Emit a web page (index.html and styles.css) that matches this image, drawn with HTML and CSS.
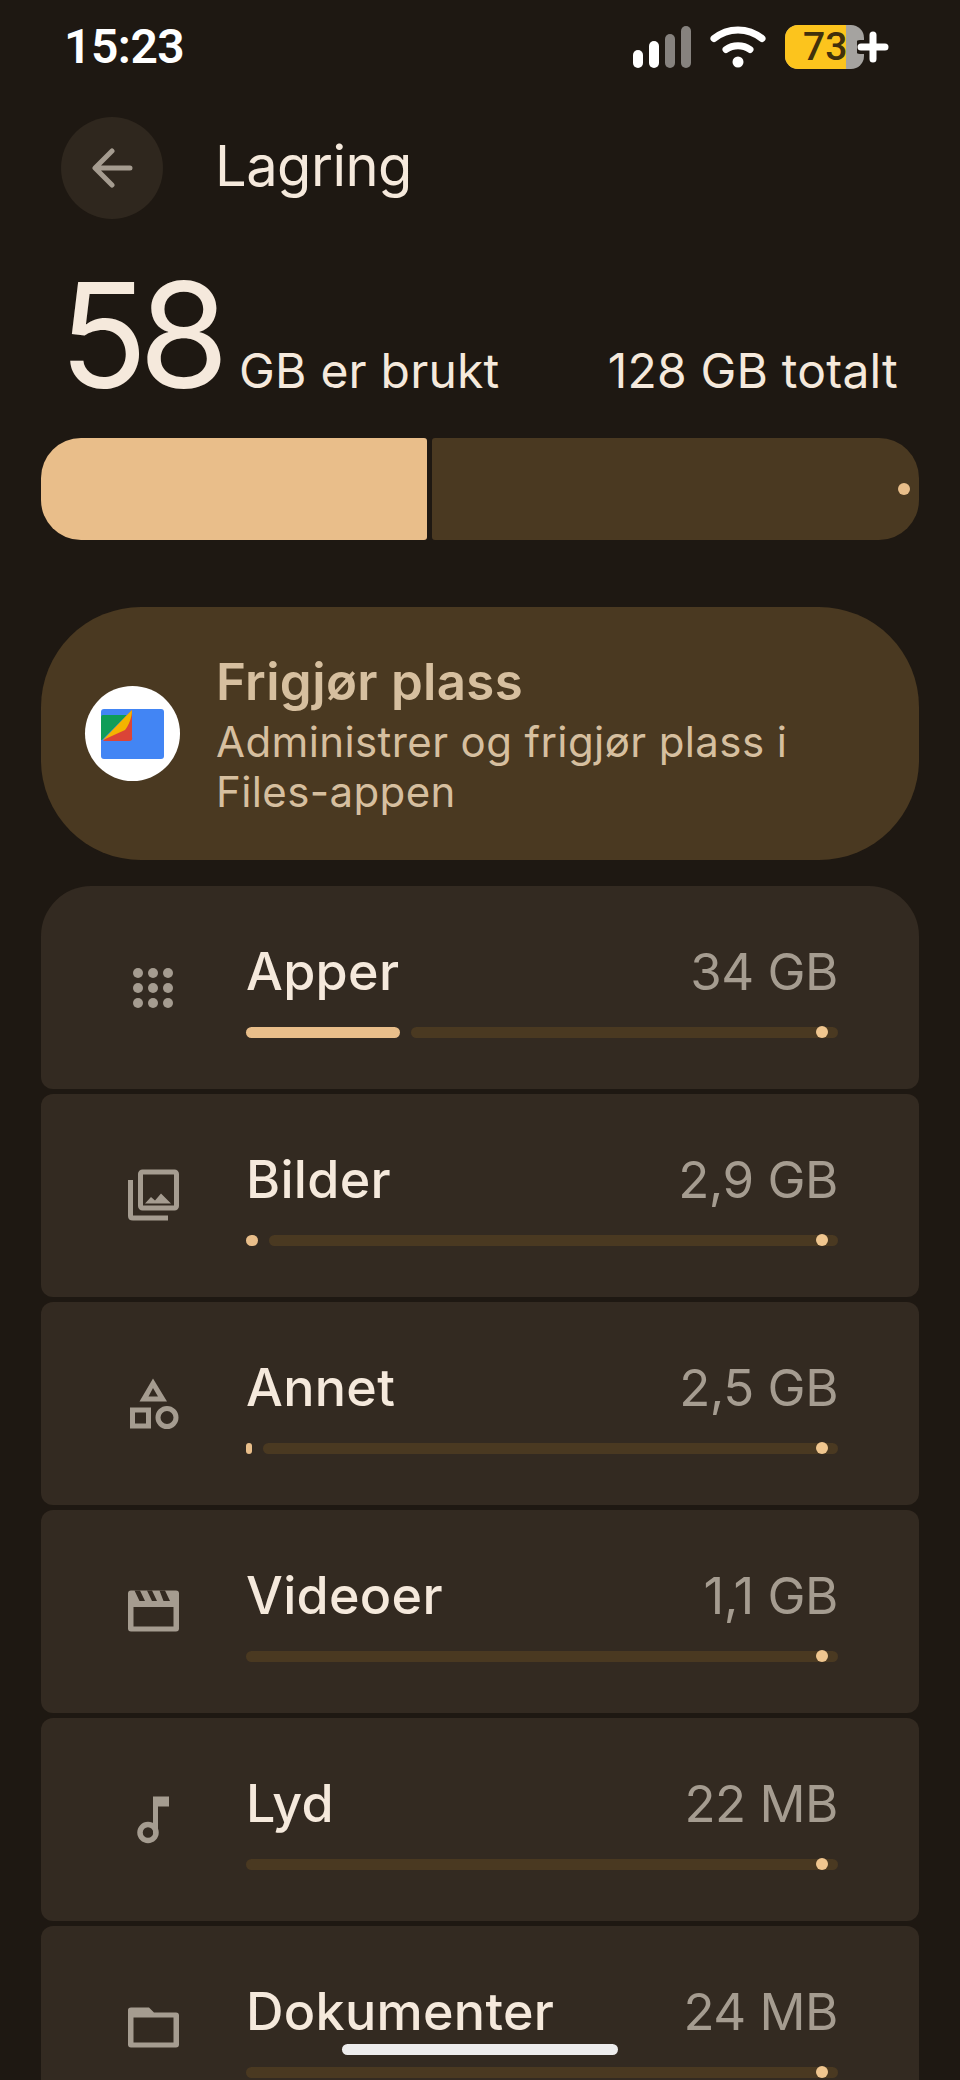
FILE: index.html
```html
<!DOCTYPE html>
<html lang="nb">
<head>
    <meta charset="UTF-8">
    <meta name="viewport" content="width=device-width, initial-scale=1.0">
    <title>Lagring</title>
    <link rel="stylesheet" href="styles.css">
</head>
<body>
    <div class="screen">
        <div class="status-bar">
            <span class="time">15:23</span>
            <div class="status-icons">
                <svg class="signal" width="58" height="42" viewBox="0 0 58 42">
                    <rect x="0" y="24" width="10" height="18" rx="5" fill="#fff"/>
                    <rect x="16" y="15" width="10" height="27" rx="5" fill="#fff"/>
                    <rect x="32" y="8" width="10" height="34" rx="5" fill="#86827e"/>
                    <rect x="48" y="0" width="10" height="42" rx="5" fill="#86827e"/>
                </svg>
                <svg class="wifi" width="56" height="42" viewBox="0 0 56 42">
                    <path d="M4 12.500C18 1 38 1 52 12.500" fill="none" stroke="#fff" stroke-width="7" stroke-linecap="round"/>
                    <path d="M16 23.500C23 18.500 33 18.500 40 23.500" fill="none" stroke="#fff" stroke-width="7" stroke-linecap="round"/>
                    <circle cx="28" cy="36" r="5.500" fill="#fff"/>
                </svg>
                <div class="battery">
                    <span class="battery-fill"></span>
                    <span class="battery-num">73</span>
                </div>
                <svg class="plus" width="32" height="32" viewBox="0 0 32 32">
                    <path d="M16 3V29M3 16H29" stroke="#1e1812" stroke-width="14" stroke-linecap="round"/>
                    <path d="M16 4V28M4 16H28" stroke="#fff" stroke-width="7" stroke-linecap="round"/>
                </svg>
            </div>
        </div>

        <div class="header">
            <div class="back-btn">
                <svg width="42" height="40" viewBox="0 0 42 40">
                    <path d="M21 3L4 20L21 37M5 20H39" fill="none" stroke="#a59c90" stroke-width="5" stroke-linecap="round" stroke-linejoin="round"/>
                </svg>
            </div>
            <h1>Lagring</h1>
        </div>

        <div class="usage">
            <div class="used"><span class="big">58</span><span class="unit">GB er brukt</span></div>
            <span class="unit">128 GB totalt</span>
        </div>

        <div class="storage-bar">
            <div class="storage-used"></div>
            <div class="storage-free"><span class="storage-dot"></span></div>
        </div>

        <div class="free-card">
            <div class="files-logo">
                <svg width="63" height="53" viewBox="0 0 63 53">
                    <rect x="0" y="2" width="63" height="50" rx="3" fill="#4285f4"/>
                    <path d="M0 10Q0 8 2 8H26L1 33H0Z" fill="#0f9d58"/>
                    <path d="M2 34L31 3V30Q32 34 28 34Z" fill="#db4437"/>
                    <path d="M2 33L26 8L31 3C31 10 28 18 24 23Z" fill="#f4b400"/>
                </svg>
            </div>
            <div class="free-text">
                <div class="free-title">Frigjør plass</div>
                <div class="free-sub">Administrer og frigjør plass i<br>Files-appen</div>
            </div>
        </div>

        <div class="list">
            <div class="row first">
                <div class="row-icon">
                    <svg width="60" height="60" viewBox="0 0 60 60" fill="#a59c90">
                        <circle cx="15" cy="15" r="5"/><circle cx="30" cy="15" r="5"/><circle cx="45" cy="15" r="5"/>
                        <circle cx="15" cy="30" r="5"/><circle cx="30" cy="30" r="5"/><circle cx="45" cy="30" r="5"/>
                        <circle cx="15" cy="45" r="5"/><circle cx="30" cy="45" r="5"/><circle cx="45" cy="45" r="5"/>
                    </svg>
                </div>
                <div class="row-main">
                    <div class="row-top"><span class="row-name">Apper</span><span class="row-size">34 GB</span></div>
                    <div class="meter">
                        <span class="meter-used" style="width: 154px"></span>
                        <span class="meter-track"><span class="meter-dot"></span></span>
                    </div>
                </div>
            </div>

            <div class="row">
                <div class="row-icon">
                    <svg width="60" height="60" viewBox="0 0 60 60" fill="none" stroke="#a59c90" stroke-width="5">
                        <rect x="17.500" y="6" width="36" height="36" rx="2"/>
                        <path d="M7.500 14V50C7.500 51.500 8.500 52 10 52H45"/>
                        <path d="M22 37.500L28 31L32 34.500L38 27.500L48 37.500Z" fill="#a59c90" stroke="none"/>
                    </svg>
                </div>
                <div class="row-main">
                    <div class="row-top"><span class="row-name">Bilder</span><span class="row-size">2,9 GB</span></div>
                    <div class="meter">
                        <span class="meter-used" style="width: 12px"></span>
                        <span class="meter-track"><span class="meter-dot"></span></span>
                    </div>
                </div>
            </div>

            <div class="row">
                <div class="row-icon">
                    <svg width="60" height="60" viewBox="0 0 60 60" fill="#a59c90">
                        <path d="M30 4.500L44 27.500H16.500ZM30 14L25.500 22.500H35Z" fill-rule="evenodd"/>
                        <rect x="9.500" y="36" width="16" height="16" fill="none" stroke="#a59c90" stroke-width="5"/>
                        <circle cx="44" cy="43.500" r="9" fill="none" stroke="#a59c90" stroke-width="5"/>
                    </svg>
                </div>
                <div class="row-main">
                    <div class="row-top"><span class="row-name">Annet</span><span class="row-size">2,5 GB</span></div>
                    <div class="meter">
                        <span class="meter-used" style="width: 6px"></span>
                        <span class="meter-track"><span class="meter-dot"></span></span>
                    </div>
                </div>
            </div>

            <div class="row">
                <div class="row-icon">
                    <svg width="60" height="60" viewBox="0 0 60 60">
                        <path d="M5 11.500Q5 8.500 8 8.500H53Q56 8.500 56 11.500V46.500Q56 49.500 53 49.500H8Q5 49.500 5 46.500ZM10.500 25V44.500H50.500V25Z" fill="#a59c90" fill-rule="evenodd"/>
                        <path d="M11.500 8.500H17L22 19H16.500ZM24 8.500H29L34 19H29ZM36.500 8.500H42L47 19H40.500Z" fill="#332a21"/>
                    </svg>
                </div>
                <div class="row-main">
                    <div class="row-top"><span class="row-name">Videoer</span><span class="row-size">1,1 GB</span></div>
                    <div class="meter">
                        <span class="meter-track"><span class="meter-dot"></span></span>
                    </div>
                </div>
            </div>

            <div class="row">
                <div class="row-icon">
                    <svg width="60" height="60" viewBox="0 0 60 60" fill="#a59c90">
                        <path d="M30 6.500H46V16.500H35V43H30Z"/>
                        <circle cx="25" cy="42.500" r="8" fill="none" stroke="#a59c90" stroke-width="5.500"/>
                    </svg>
                </div>
                <div class="row-main">
                    <div class="row-top"><span class="row-name">Lyd</span><span class="row-size">22 MB</span></div>
                    <div class="meter">
                        <span class="meter-track"><span class="meter-dot"></span></span>
                    </div>
                </div>
            </div>

            <div class="row">
                <div class="row-icon">
                    <svg width="60" height="60" viewBox="0 0 60 60">
                        <path d="M5 12Q5 9.500 8 9.500H26L31 14.500H53Q56 14.500 56 17.500V46.500Q56 49.500 53 49.500H8Q5 49.500 5 46.500ZM10.500 19.500V44.500H50.500V19.500Z" fill="#a59c90" fill-rule="evenodd"/>
                    </svg>
                </div>
                <div class="row-main">
                    <div class="row-top"><span class="row-name">Dokumenter</span><span class="row-size">24 MB</span></div>
                    <div class="meter">
                        <span class="meter-track"><span class="meter-dot"></span></span>
                    </div>
                </div>
            </div>
        </div>

        <div class="home-indicator"></div>
    </div>
</body>
</html>
```

FILE: styles.css
```css
* {
    box-sizing: border-box;
}
html, body {
    margin: 0;
    padding: 0;
    background: #1e1812;
}
body {
    font-family: Inter, Lato, sans-serif;
    color: #f5e9dc;
}
.screen {
    position: relative;
    width: 960px;
    height: 2080px;
    overflow: hidden;
    padding: 0 41px;
    background: #1e1812;
}

/* status bar */
.status-bar {
    height: 92px;
    padding: 23px 38px 0 23px;
    margin-right: -8px;
    display: flex;
    justify-content: space-between;
    align-items: flex-start;
}
.time {
    font-family: Roboto, sans-serif;
    font-size: 48px;
    font-weight: 600;
    letter-spacing: -0.5px;
    line-height: 48px;
    color: #fff;
}
.status-icons {
    display: flex;
    align-items: center;
    gap: 19px;
    height: 44px;
    margin-top: 2px;
}
.battery {
    position: relative;
    width: 79px;
    height: 44px;
    border-radius: 13px;
    background: #a5a3a0;
    overflow: hidden;
}
.battery-fill {
    position: absolute;
    left: 0;
    top: 0;
    bottom: 0;
    width: 61px;
    background: #fcc41d;
}
.battery-num {
    position: absolute;
    left: 18px;
    top: 0;
    font-family: Roboto, sans-serif;
    font-size: 39px;
    line-height: 44px;
    font-weight: 500;
    color: #41300c;
}
.plus {
    margin-left: -26px;
    position: relative;
}

/* header */
.header {
    display: flex;
    align-items: center;
    gap: 52px;
    padding-left: 20px;
    height: 102px;
    margin-top: 25px;
}
.back-btn {
    width: 102px;
    height: 102px;
    border-radius: 50%;
    background: #2f271e;
    display: flex;
    align-items: center;
    justify-content: center;
}
h1 {
    margin: 0 0 4px;
    font-size: 56px;
    font-weight: 400;
    letter-spacing: -0.5px;
    color: #f5e9dc;
}

/* usage */
.usage {
    display: flex;
    justify-content: space-between;
    align-items: baseline;
    padding: 0 21px 0 18px;
    margin-top: 51px;
    height: 147px;
}
.big {
    font-size: 146px;
    line-height: 130px;
    font-weight: 400;
    letter-spacing: -9px;
    margin-right: 19px;
}
.unit {
    font-size: 48px;
    letter-spacing: 0.2px;
}

.storage-bar {
    display: flex;
    gap: 5px;
    height: 102px;
    margin-top: 21px;
}
.storage-used {
    width: 386px;
    background: #e9be8a;
    border-radius: 40px 3px 3px 40px;
}
.storage-free {
    flex: 1;
    background: #4a3921;
    border-radius: 3px 40px 40px 3px;
    display: flex;
    align-items: center;
    justify-content: flex-end;
    padding-right: 9px;
}
.storage-dot {
    width: 12px;
    height: 12px;
    border-radius: 50%;
    background: #e9be8a;
}

/* free up card */
.free-card {
    display: flex;
    align-items: center;
    height: 253px;
    margin-top: 67px;
    padding-left: 44px;
    gap: 36px;
    background: #4a3921;
    border-radius: 100px;
}
.files-logo {
    width: 95px;
    height: 95px;
    border-radius: 50%;
    background: #fff;
    display: flex;
    align-items: center;
    justify-content: center;
    flex-shrink: 0;
}
.free-text {
    padding-top: 5px;
}
.free-title {
    font-size: 51px;
    font-weight: 600;
    letter-spacing: 0.3px;
    line-height: 54px;
    color: #d6bf9f;
}
.free-sub {
    margin-top: 8px;
    font-size: 42px;
    letter-spacing: 0.4px;
    line-height: 50px;
    color: #d6bf9f;
}

/* list */
.list {
    display: flex;
    flex-direction: column;
    gap: 5px;
    margin-top: 26px;
}
.row {
    display: flex;
    height: 203px;
    flex-shrink: 0;
    padding: 0 81px 0 82px;
    align-items: center;
    background: #332a21;
    border-radius: 12px;
}
.row.first {
    border-radius: 50px 50px 12px 12px;
}
.row-icon {
    width: 60px;
    height: 60px;
    margin-right: 63px;
    flex-shrink: 0;
}
.row-icon svg {
    display: block;
}
.row-main {
    flex: 1;
    min-width: 0;
    margin-top: 7px;
}
.row-top {
    display: flex;
    justify-content: space-between;
    align-items: baseline;
    line-height: 60px;
    margin-top: -2px;
}
.row-name {
    font-size: 52px;
    font-weight: 500;
    letter-spacing: 0.3px;
    color: #f5e9dc;
}
.row-size {
    font-size: 51px;
    letter-spacing: -0.5px;
    color: #a59c90;
}
.meter {
    display: flex;
    align-items: center;
    gap: 11px;
    height: 12px;
    margin-top: 24px;
}
.meter-used {
    height: 11px;
    border-radius: 6px;
    background: #e9be8a;
    flex-shrink: 0;
}
.meter-track {
    flex: 1;
    height: 11px;
    border-radius: 6px;
    background: #4a3921;
    display: flex;
    align-items: center;
    justify-content: flex-end;
    padding-right: 10px;
}
.meter-dot {
    width: 12px;
    height: 12px;
    flex-shrink: 0;
    border-radius: 50%;
    background: #f0c68f;
}

.home-indicator {
    position: absolute;
    left: 342px;
    top: 2044px;
    width: 276px;
    height: 11px;
    border-radius: 6px;
    background: #eeeded;
}
```
